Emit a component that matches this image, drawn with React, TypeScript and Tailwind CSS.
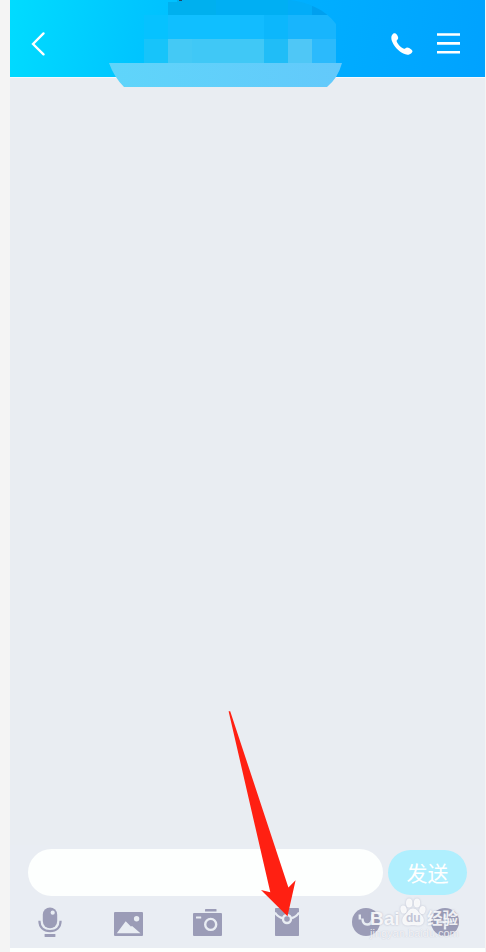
import type { ReactNode } from "react";

const iconColor = "#9b9cb7";

function MicIcon() {
  return (
    <svg width="24" height="30" viewBox="0 0 24 30" fill="none">
      <rect x="4.8" y="0.5" width="14.4" height="20.8" rx="7.2" fill={iconColor} />
      <circle cx="14.7" cy="5.7" r="2.1" fill="#e9edf3" />
      <path d="M1.4 13.8C1.4 20.5 5.6 24.2 12 24.2s10.6-3.7 10.6-10.4" stroke={iconColor} strokeWidth="2.2" />
      <rect x="6.6" y="27" width="10.8" height="3" rx="0.6" fill={iconColor} />
    </svg>
  );
}

function PhotoIcon() {
  return (
    <svg className="mt-[3px]" width="29" height="24" viewBox="0 0 29 24">
      <rect width="29" height="24" rx="1" fill={iconColor} />
      <path d="M2.8 21.3L11.7 9.3l5.2 5.3 1.2-.7 8.4 7.4z" fill="#e9edf3" />
      <circle cx="22.6" cy="6.8" r="2.7" fill="#e9edf3" />
    </svg>
  );
}

function CameraIcon() {
  return (
    <svg width="29" height="27" viewBox="0 0 29 27">
      <rect x="12" y="0" width="11.5" height="2.6" rx="0.6" fill={iconColor} />
      <rect y="4" width="29" height="23" rx="1" fill={iconColor} />
      <rect x="3" y="7.4" width="5.2" height="2.2" rx="0.4" fill="#e9edf3" />
      <circle cx="17.7" cy="15.4" r="5.5" fill="none" stroke="#e9edf3" strokeWidth="2.4" />
    </svg>
  );
}

function PacketIcon() {
  return (
    <svg width="24" height="28" viewBox="0 0 24 28" fill="none">
      <rect width="24" height="28" rx="0.8" fill={iconColor} />
      <path d="M0 4.5c2 3.2 4.8 5 8 5.6m8 0c3.2-.6 6-2.4 8-5.6" stroke="#e9edf3" strokeWidth="2.2" />
      <circle cx="12" cy="11" r="4" stroke="#e9edf3" strokeWidth="2.4" />
    </svg>
  );
}

function SmileIcon() {
  return (
    <svg width="28" height="28" viewBox="0 0 28 28" fill="none">
      <circle cx="14" cy="14" r="14" fill={iconColor} />
      <path d="M7.8 6.5v5M20.2 6.5v5M10.4 10.5c.3 4.6 2.1 6 4.8 6 2.8 0 4.3-1.4 4.8-4.5" stroke="#e9edf3" strokeWidth="2.4" />
    </svg>
  );
}

function PlusIcon() {
  return (
    <svg width="28" height="28" viewBox="0 0 28 28" fill="none">
      <circle cx="14" cy="14" r="14" fill={iconColor} />
      <path d="M14 6.5v15M6.5 14h15" stroke="#e9edf3" strokeWidth="2.4" />
    </svg>
  );
}

function Tool({ children }: { children: ReactNode }) {
  return <div className="flex flex-1 justify-center">{children}</div>;
}

// Pixelated cover over the contact name
function NameMosaic() {
  return (
    <svg className="absolute left-[98px] top-0" width="236" height="88" viewBox="108 0 236 88" shapeRendering="crispEdges">
      <defs>
        <clipPath id="nameShape">
          <path d="M108 0H290C307 2 325 9 336 24V63H342Q338 78 327 87H124Q114 77 109 63z" />
        </clipPath>
        <linearGradient id="strip" x1="0" x2="1">
          <stop offset="0" stopColor="#5fd5fa" />
          <stop offset="1" stopColor="#63c9fb" />
        </linearGradient>
      </defs>
      <g clipPath="url(#nameShape)">
        <path d="M168 2h9v-2h39v15h-48z" fill="#00b0ee" />
        <path d="M216 0h72v15h-72z" fill="#00aff3" />
        <path d="M288 0h24v15h-24z" fill="#02acf8" />
        <path d="M312 0h24v15h-24z" fill="#00a0ef" />
        <path d="M144 15h24v24h-24z" fill="#06c2ff" />
        <path d="M168 15h72v24h-72z" fill="#10bfff" />
        <path d="M240 15h24v24h-24z" fill="#12bcff" />
        <path d="M264 15h24v24h-24z" fill="#0cb7fc" />
        <path d="M288 15h48v24h-48z" fill="#18b5fd" />
        <path d="M144 39h24v24h-24z" fill="#17c4fa" />
        <path d="M168 39h24v24h-24z" fill="#44c9f5" />
        <path d="M192 39h72v24h-72z" fill="#40c8f6" />
        <path d="M264 39h24v24h-24z" fill="#20bdf7" />
        <path d="M288 39h24v24h-24z" fill="#4fc7f6" />
        <path d="M312 39h24v24h-24z" fill="#2bbafc" />
        <path d="M108 63h236v24H108z" fill="url(#strip)" />
      </g>
      <path d="M178 0h5l-2 1h-2z" fill="#244866" />
    </svg>
  );
}

function Watermark() {
  return (
    <div className="absolute left-[370px] top-[898px] h-[42px] w-[92px] text-white/85 font-['Liberation_Sans','Noto_Sans_CJK_SC',sans-serif] [text-shadow:0_0_2px_#8f93adaa]">
      <div className="flex h-[29px] items-start leading-none">
        <span className="w-[30px] pt-[13px] text-[19px] leading-[16px] font-bold">Bai</span>
        <div className="relative h-[28px] w-[26px]">
          <svg className="drop-shadow-[0_0_1px_#8f93ad88]" width="26" height="28" viewBox="0 0 26 28" fill="currentColor">
            <ellipse cx="3.6" cy="11.5" rx="3.1" ry="4.1" transform="rotate(-14 3.6 11.5)" />
            <ellipse cx="9.2" cy="5" rx="3.2" ry="4.6" />
            <ellipse cx="17" cy="5" rx="3.2" ry="4.6" />
            <ellipse cx="22.4" cy="12" rx="3.1" ry="4.1" transform="rotate(14 22.4 12)" />
            <path d="M13 10.5c-4 0-4.9 3.6-7.7 6-4.9 4.2-3.7 11 2.1 11 2.3 0 3.4-.6 5.6-.6s3.4.6 5.7.6c5.8 0 7-6.8 2.1-11-2.9-2.4-3.8-6-7.8-6z" />
          </svg>
          <span className="absolute left-[6px] top-[14px] text-[12px] leading-[12px] font-bold text-[#c2c5d6] [text-shadow:none]">du</span>
        </div>
        <span className="whitespace-nowrap pl-px pt-[13px] text-[15.5px] leading-[16px] font-bold">经验</span>
      </div>
      <div className="whitespace-nowrap text-[11px] leading-[13px] text-white/80 [text-shadow:0_0_1px_#8f93ad99]">
        jingyan.baidu.com
      </div>
    </div>
  );
}

export default function App() {
  return (
    <div className="relative h-[952px] w-[486px] overflow-hidden bg-[#f4f4f4] pl-[10px] pr-px font-['Liberation_Sans','Noto_Sans_CJK_SC',sans-serif]">
      <div className="flex h-full w-full flex-col bg-white">
        {/* Header */}
        <header className="relative flex h-[77px] shrink-0 items-center justify-between bg-[linear-gradient(100deg,#00dcff_0%,#00c6ff_26%,#00afff_60%,#00a2ff_100%)] pl-[21px] pr-[25px] pt-[10px]">
          <NameMosaic />
          <svg width="14" height="24" viewBox="0 0 14 24" fill="none" stroke="white" strokeWidth="2.3" strokeLinecap="round">
            <path d="M12.5 1.4L2 12l10.5 10.4" />
          </svg>
          <div className="flex items-center gap-[24px]">
            <svg width="22" height="22" viewBox="0 0 22 22" fill="white">
              <path d="M2.4.6C3.5-.3 4.8.2 5.7 1.5 6.9 3.2 8 5.3 6.3 6.8c-.9.8-.8 1.6 0 2.9 1.2 2 3 4 5.1 5.4 1.5 1 2.2.8 3.1.1 1.7-1.4 3.8-.1 5.8 1.3 1.7 1.2 1.4 2.3.3 3.4-2.2 2.3-5.4 2.1-8.3.7C7.3 18.1 2.7 13.1.9 8.1-.1 5.2.1 2.3 2.4.6z" />
            </svg>
            <svg width="23" height="21" viewBox="0 0 23 21" fill="white">
              <path d="M0 0.2h23v2.6H0zM0 9.1h23v2.6H0zM0 18h23v2.6H0z" />
            </svg>
          </div>
        </header>

        {/* Messages */}
        <main className="flex-1 border-t border-[#f6f9fd] bg-[#e9edf2]" />

        {/* Composer */}
        <footer className="h-[103px] shrink-0 bg-[#e9edf3] pt-1">
          <div className="flex h-[47px] items-center gap-[5px] px-[18px]">
            <div className="h-[47px] w-[355px] rounded-full bg-[#fdfffe]" />
            <button className="h-[45px] w-[79px] rounded-full bg-[#afeffe] text-[21px] leading-[47px] text-white">
              发送
            </button>
          </div>
          <div className="flex h-[52px] items-center">
            <Tool><MicIcon /></Tool>
            <Tool><PhotoIcon /></Tool>
            <Tool><CameraIcon /></Tool>
            <Tool><PacketIcon /></Tool>
            <Tool><SmileIcon /></Tool>
            <Tool><PlusIcon /></Tool>
          </div>
        </footer>
        <div className="h-1 shrink-0 bg-[#fdfffe]" />
      </div>

      <Watermark />

      {/* Pointer to the red packet button */}
      <svg className="absolute left-[228px] top-[710px]" width="70" height="208" viewBox="228 710 70 208">
        <path d="M228.6 711.2L270.3 892.2 261 890 287.5 916.3 295.6 880.2 288.4 887.4 230.2 711.2z" fill="#ff2012" />
      </svg>
    </div>
  );
}
